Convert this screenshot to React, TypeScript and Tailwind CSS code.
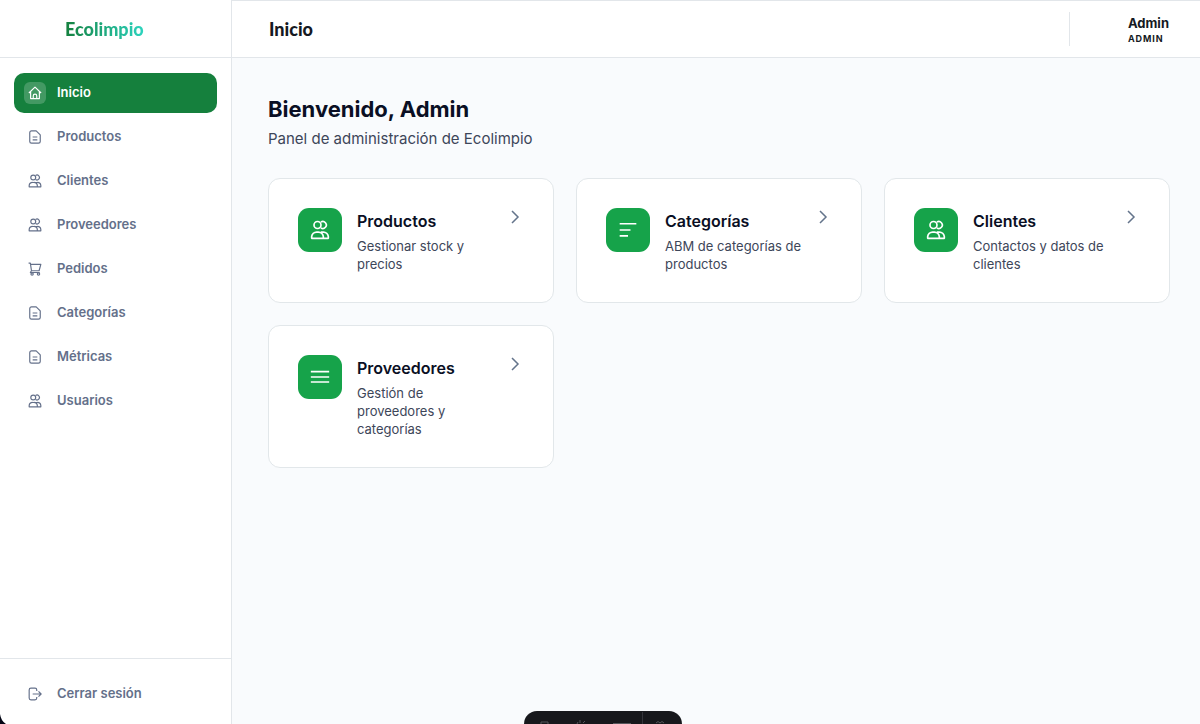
import type { ReactNode } from "react";

type IconName = "home" | "doc" | "users" | "cart" | "logout" | "bars" | "menu";

const shapes: Record<IconName, ReactNode> = {
  home: <path d="M1.500 12 12 2l10.500 10M4.500 10v11.500h15V10M9 21.500V17a3 3 0 0 1 6 0v4.500" />,
  doc: <path d="M14 1.500H6a3 3 0 0 0-3 3v15a3 3 0 0 0 3 3h12a3 3 0 0 0 3-3v-11zM8 12h8M8 17h8" />,
  users: (
    <>
      <circle cx="9" cy="6" r="4.200" />
      <path d="M13 2.500a4.200 4.200 0 1 1 0 7M2 22v-2a6 6 0 0 1 6-5.500h2a6 6 0 0 1 6 5.500v2zM13 14.500h3a6 6 0 0 1 6 5.500v2h-6" />
    </>
  ),
  cart: (
    <>
      <path d="M1 2h3l2 13h13l3-11H4.500M6 15l-2 3h16" />
      <circle cx="7" cy="20.500" r="2" />
      <circle cx="18" cy="20.500" r="2" />
    </>
  ),
  logout: <path d="M15 7V5a3 3 0 0 0-3-3H5a3 3 0 0 0-3 3v14a3 3 0 0 0 3 3h7a3 3 0 0 0 3-3v-2M8 12h15M18 7.500l4.500 4.500-4.500 4.500" />,
  bars: <path d="M2 4.500h20M2 12h13M2 19h10" />,
  menu: <path d="M1 5.500h22M1 12h22M1 18h22" />,
};

function Icon({ name, className }: { name: IconName; className: string }) {
  return (
    <svg viewBox="0 0 24 24" fill="none" stroke="currentColor" strokeWidth="2" strokeLinejoin="round" className={className} aria-hidden="true">
      {shapes[name]}
    </svg>
  );
}

const nav: { label: string; icon: IconName }[] = [
  { label: "Inicio", icon: "home" },
  { label: "Productos", icon: "doc" },
  { label: "Clientes", icon: "users" },
  { label: "Proveedores", icon: "users" },
  { label: "Pedidos", icon: "cart" },
  { label: "Categorías", icon: "doc" },
  { label: "Métricas", icon: "doc" },
  { label: "Usuarios", icon: "users" },
];

const cards: { title: string; text: string; icon: IconName }[] = [
  { title: "Productos", text: "Gestionar stock y precios", icon: "users" },
  { title: "Categorías", text: "ABM de categorías de productos", icon: "bars" },
  { title: "Clientes", text: "Contactos y datos de clientes", icon: "users" },
  { title: "Proveedores", text: "Gestión de proveedores y categorías", icon: "menu" },
];

function Sidebar() {
  return (
    <aside className="sticky top-0 flex h-screen w-58 shrink-0 flex-col border-r border-[#e2e6ea] bg-white">
      <div className="flex h-[58px] shrink-0 items-center border-b border-[#e2e6ea] pl-[65px]">
        <a href="#" className="bg-linear-to-r from-[#15803d] to-[#2dd4bf] bg-clip-text font-[Lato,sans-serif] text-lg font-black text-transparent">
          Ecolimpio
        </a>
      </div>
      <nav className="flex flex-1 flex-col gap-1 px-[14px] pt-[15px]">
        {nav.map((item, i) => (
          <a
            key={item.label}
            href="#"
            aria-current={i === 0 ? "page" : undefined}
            className={
              "flex h-10 items-center gap-[11px] rounded-[10px] px-[10px] text-[13px] font-semibold " +
              (i === 0 ? "bg-[#15803d] text-white" : "text-[#64708a]")
            }
          >
            <span className={"flex size-[22px] items-center justify-center rounded-md " + (i === 0 ? "bg-white/20" : "")}>
              <Icon name={item.icon} className="size-[14px]" />
            </span>
            {item.label}
          </a>
        ))}
      </nav>
      <div className="border-t border-[#e2e6ea] px-[14px] pt-4 pb-3">
        <button type="button" className="flex h-[37px] w-full items-center gap-[11px] px-[10px] text-[13px] font-semibold text-[#64708a]">
          <span className="flex size-[22px] items-center justify-center">
            <Icon name="logout" className="size-[14px]" />
          </span>
          Cerrar sesión
        </button>
      </div>
    </aside>
  );
}

function Card({ title, text, icon }: { title: string; text: string; icon: IconName }) {
  return (
    <a href="#" className="flex items-start rounded-xl border border-[#e2e7ea] bg-white p-[29px] text-[#0a0f24]">
      <span className="flex size-11 shrink-0 items-center justify-center rounded-[11px] bg-[#16a34a] text-white">
        <Icon name={icon} className="size-5" />
      </span>
      <span className="ml-[15px] flex min-w-0 flex-1 flex-col gap-1 pt-px">
        <span className="text-base leading-6 font-semibold">{title}</span>
        <span className="text-[13px] leading-[18px] text-[#3d4659]">{text}</span>
      </span>
      <svg viewBox="0 0 18 18" fill="none" stroke="currentColor" strokeWidth="1.500" className="ml-2 size-[18px] shrink-0 text-[#64748b]" aria-hidden="true">
        <path d="m6 3 6 6-6 6" />
      </svg>
    </a>
  );
}

export default function App() {
  return (
    <div className="relative flex min-h-screen bg-[#f9fbfd] font-[Inter,sans-serif] text-[#0a0f24]">
      <Sidebar />
      <div className="min-w-0 flex-1">
        <header className="flex h-[58px] items-center justify-between border-y border-[#e2e6ea] bg-white pr-[31px] pl-[37px]">
          <p className="font-[Lato,sans-serif] text-lg font-black text-[#151922]">Inicio</p>
          <div className="flex h-[34px] items-center border-l border-[#e2e6ea] pl-[58px] text-[#151922]">
            <div className="flex flex-col">
              <span className="text-[13px] leading-[18px] font-bold">Admin</span>
              <span className="text-[9px] leading-[13px] font-bold tracking-widest">ADMIN</span>
            </div>
          </div>
        </header>
        <main className="pt-9 pr-[30px] pb-10 pl-9">
          <h1 className="text-[22px] leading-[30px] font-bold">Bienvenido, Admin</h1>
          <p className="mt-1 text-[15px] leading-[22px] text-[#3d4659]">Panel de administración de Ecolimpio</p>
          <section className="mt-7 grid grid-cols-3 items-start gap-[22px]">
            {cards.map((card) => (
              <Card key={card.title} {...card} />
            ))}
          </section>
        </main>
      </div>
      <svg viewBox="0 0 8 10" className="fixed bottom-0 left-0 h-[10px] w-2" aria-hidden="true">
        <path d="M0 0Q1 7 6 10H0Z" fill="#030514" />
      </svg>
      <div className="fixed bottom-0 left-1/2 h-[13px] w-[158px] -translate-x-[76px] overflow-hidden rounded-t-[20px] bg-[#17181c]">
        <svg viewBox="0 0 158 13" className="h-[13px] w-[158px]" fill="none" stroke="#55565b" aria-hidden="true">
          <path d="M17 13v-2h7v2M53 13l1-2M56 12v-3M59 12l2-2M89 12.500h18M132 12q2-3 4 0q2-3 4 0" />
          <path d="M118.500 1v12" stroke="#34353b" />
        </svg>
      </div>
    </div>
  );
}
